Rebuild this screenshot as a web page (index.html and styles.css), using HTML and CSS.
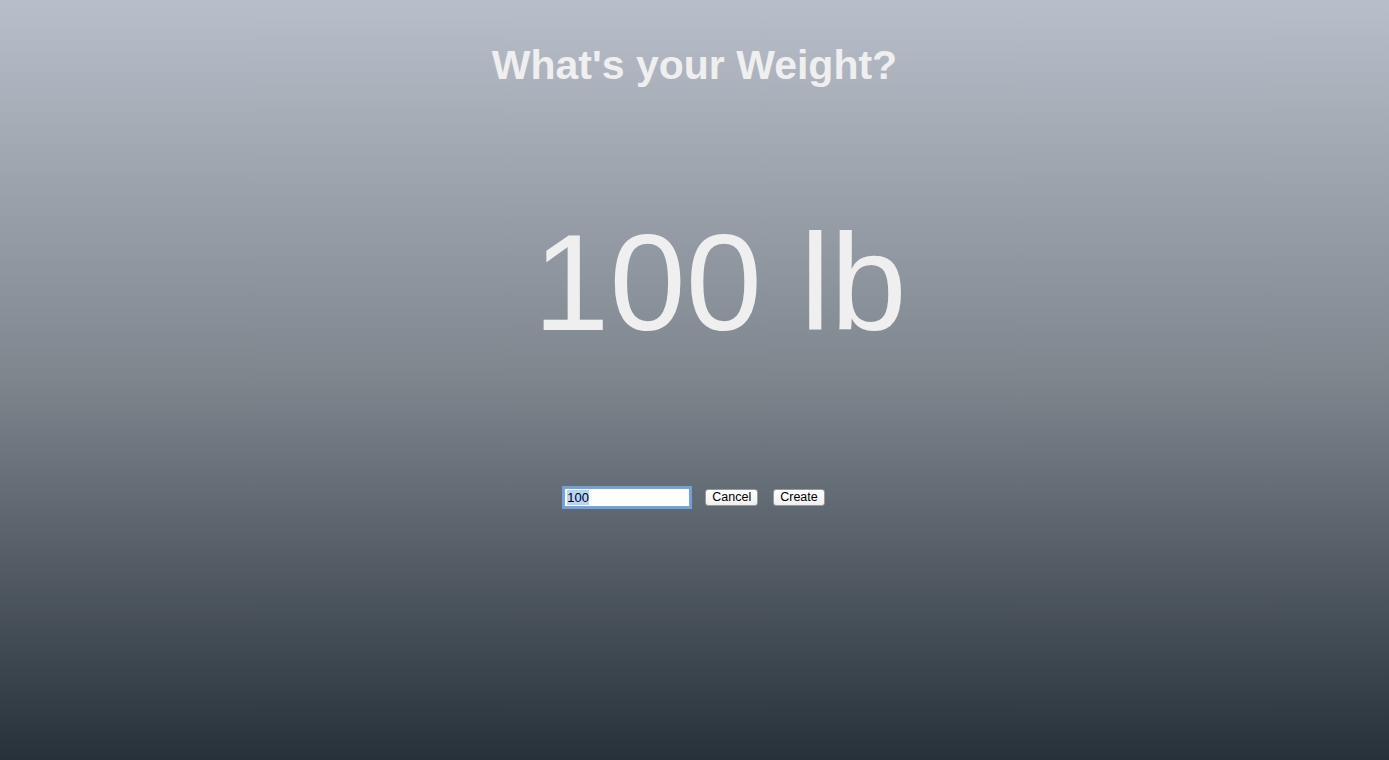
FILE: index.html
```html
<!DOCTYPE html>
<html>
<head>
<meta charset="utf-8">
<link rel="stylesheet" href="styles.css">
</head>
<body>
<main class="page">
  <h1 class="title">What's your Weight?</h1>
  <div class="weight">100 lb</div>
  <form class="controls">
    <input class="field" id="weight-field" type="text" value="100">
    <button type="button" class="btn">Cancel</button>
    <button type="button" class="btn">Create</button>
  </form>
</main>
<script src="app.js"></script>
</body>
</html>
```
FILE: styles.css
```css
html, body {
  margin: 0;
  height: 100%;
}
body {
  background: linear-gradient(to bottom, #b9bfca 0%, #7d858d 50%, #27313a 100%);
  font-family: "Liberation Sans", Arial, sans-serif;
}
.page {
  height: 760px;
  display: flex;
  flex-direction: column;
  align-items: center;
}
.title {
  margin: 40px 0 0;
  font-size: 41px;
  line-height: 50px;
  font-weight: bold;
  color: #efefef;
}
.weight {
  margin-top: 114px;
  padding-left: 51px;
  font-size: 137px;
  line-height: 158px;
  color: #efefef;
}
.controls {
  margin-top: 126px;
  display: flex;
  align-items: flex-start;
  gap: 15px;
}
.field {
  width: 120px;
  height: 17px;
  padding: 0 2px;
  border: 1px solid #7aa7d9;
  outline: 2px solid #6fa0e0;
  font-family: "Liberation Sans", Arial, sans-serif;
  font-size: 13px;
  color: #000;
  background: #fff;
}
.field::selection {
  background: #b5d5ff;
  color: #000;
}
.btn {
  height: 17px;
  padding: 0 6px;
  margin-top: 1px;
  border: 1px solid #9a9a9a;
  border-radius: 3px;
  background: linear-gradient(#ffffff, #f0f0f0);
  font-family: "Liberation Sans", Arial, sans-serif;
  font-size: 12.5px;
  line-height: 15px;
  color: #000;
}
```
FILE: app.js
```js
var f = document.getElementById('weight-field');
f.focus();
f.select();
```
